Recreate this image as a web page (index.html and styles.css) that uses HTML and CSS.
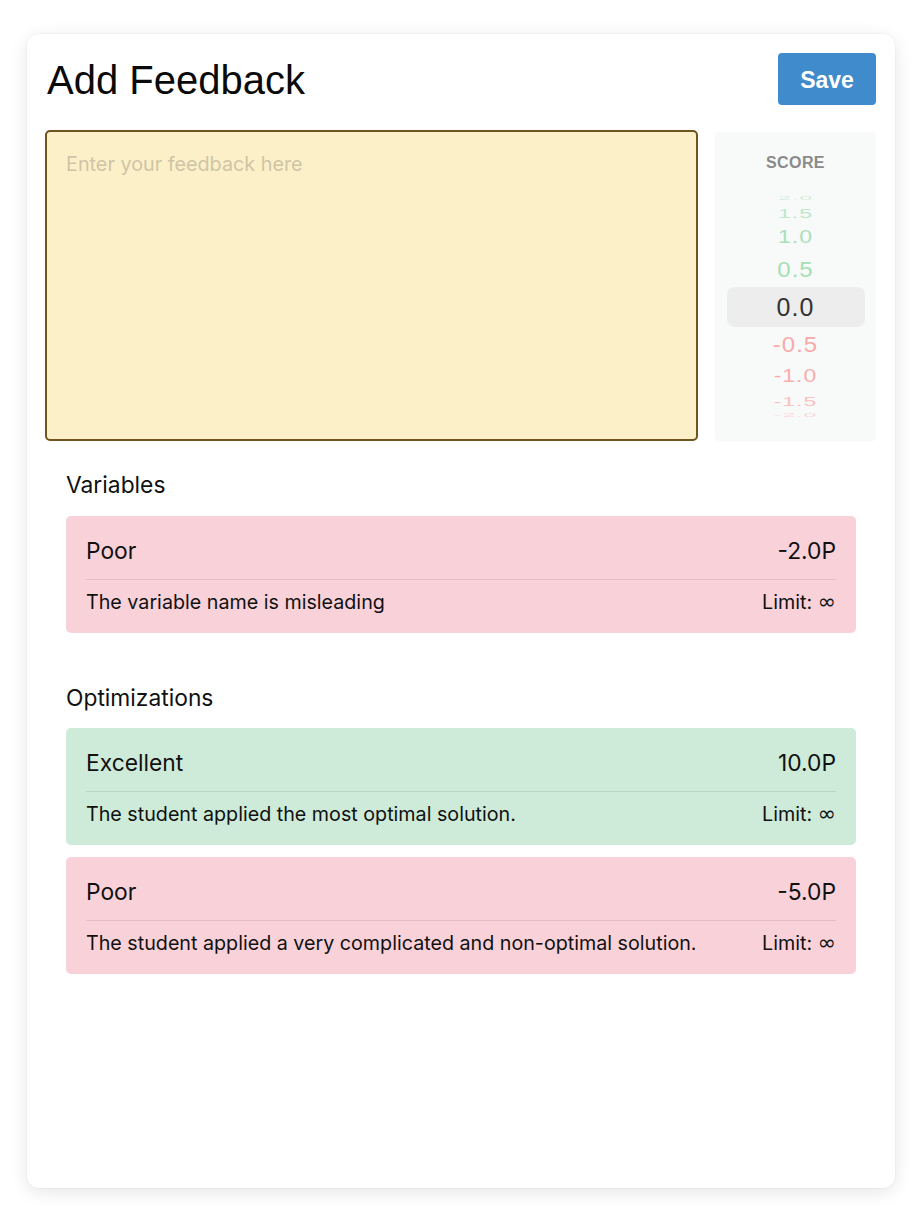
FILE: index.html
```html
<!DOCTYPE html>
<html lang="en">
<head>
<meta charset="utf-8">
<title>Add Feedback</title>
<link rel="stylesheet" href="styles.css">
</head>
<body>
<div class="sheet">
  <header class="head">
    <h1 class="title">Add Feedback</h1>
    <button class="save">Save</button>
  </header>
  <div class="top">
    <div class="feedback"><span class="placeholder">Enter your feedback here</span></div>
    <div class="score">
      <div class="score-label">SCORE</div>
      <div class="wheel">
        <div class="item pos d4"><span>2.0</span></div>
        <div class="item pos d3"><span>1.5</span></div>
        <div class="item pos d2"><span>1.0</span></div>
        <div class="item pos d1"><span>0.5</span></div>
        <div class="item sel"><span>0.0</span></div>
        <div class="item neg d1"><span>-0.5</span></div>
        <div class="item neg d2"><span>-1.0</span></div>
        <div class="item neg d3"><span>-1.5</span></div>
        <div class="item neg d4"><span>-2.0</span></div>
      </div>
    </div>
  </div>

  <section class="group">
    <h2 class="group-title">Variables</h2>
    <div class="crit bad">
      <div class="crit-row main"><span>Poor</span><span>-2.0P</span></div>
      <div class="crit-row sub"><span>The variable name is misleading</span><span>Limit: <span class="inf">∞</span></span></div>
    </div>
  </section>

  <section class="group">
    <h2 class="group-title">Optimizations</h2>
    <div class="crit good">
      <div class="crit-row main"><span>Excellent</span><span>10.0P</span></div>
      <div class="crit-row sub"><span>The student applied the most optimal solution.</span><span>Limit: <span class="inf">∞</span></span></div>
    </div>
    <div class="crit bad">
      <div class="crit-row main"><span>Poor</span><span>-5.0P</span></div>
      <div class="crit-row sub"><span>The student applied a very complicated and non-optimal solution.</span><span>Limit: <span class="inf">∞</span></span></div>
    </div>
  </section>
</div>
</body>
</html>
```

FILE: styles.css
```css
* { box-sizing: border-box; }
html, body { margin: 0; padding: 0; background: #ffffff; }
body {
  font-family: Inter, "Liberation Sans", Arial, sans-serif;
  color: #111;
  padding: 34px 28px 35px 27px;
}
.sheet {
  background: #fff;
  border-radius: 12px;
  box-shadow: 0 4px 18px rgba(0,0,0,0.10), 0 0 2px rgba(0,0,0,0.08);
  height: 1154px;
  padding: 19px 19px 0 20px;
}
.head {
  display: flex;
  justify-content: space-between;
  align-items: flex-start;
  height: 77px;
}
.title {
  margin: 7px 0 0 0;
  font-family: "Liberation Sans", Arial, sans-serif;
  font-weight: 400;
  font-size: 40px;
  line-height: 40px;
  color: #0a0a0a;
}
.save {
  width: 98px;
  height: 52px;
  border: none;
  border-radius: 4px;
  background: #3f8bcb;
  color: #fff;
  font-family: "Liberation Sans", Arial, sans-serif;
  font-weight: 700;
  font-size: 23px;
  padding: 3px 0 0 0;
}
.top {
  display: flex;
  gap: 17px;
  margin-left: -2px;
  height: 311px;
}
.feedback {
  width: 653px;
  height: 311px;
  background: #fcf0c9;
  border: 2px solid #6f5420;
  border-radius: 5px;
  padding: 20px 19px;
}
.placeholder {
  font-size: 19.8px;
  color: #cfc5a6;
}
.score {
  flex: 1;
  margin-top: 2px;
  background: #f8f9f9;
  border-radius: 4px;
  display: flex;
  flex-direction: column;
  align-items: center;
  padding-top: 22px;
}
.score-label {
  font-family: "Liberation Sans", Arial, sans-serif;
  font-weight: 700;
  font-size: 16px;
  color: #8a8a8a;
  letter-spacing: 0.4px;
  line-height: 18px;
}
.wheel {
  margin-top: 22px;
  width: 138px;
  display: flex;
  flex-direction: column;
  align-items: center;
  font-family: "Liberation Sans", Arial, sans-serif;
}
.item {
  width: 100%;
  display: flex;
  align-items: center;
  justify-content: center;
  overflow: visible;
}
.item span {
  display: inline-block;
  font-size: 25px;
  line-height: 1;
  letter-spacing: 1px;
}
.item.sel {
  height: 40px;
  background: #ededed;
  border-radius: 8px;
  color: #333;
}
.item.d1 { height: 35px; }
.item.d1 span { transform: scaleY(0.92); font-size: 24px; }
.item.d2 { height: 29px; }
.item.d2 span { transform: scaleY(0.78); font-size: 23px; }
.item.d3 { height: 20px; }
.item.d3 span { transform: scaleY(0.55); font-size: 23px; }
.item.d4 { height: 9px; }
.item.d4 span { transform: scaleY(0.25); font-size: 23px; }
.pos { color: #96dca8; }
.neg { color: #f89c9c; }
.pos.d1, .neg.d1 { opacity: 0.85; }
.pos.d2, .neg.d2 { opacity: 0.8; }
.pos.d3, .neg.d3 { opacity: 0.6; }
.pos.d4, .neg.d4 { opacity: 0.35; }

.group {
  padding: 0 20px 0 19px;
}
.group + .group { margin-top: 52px; }
.group-title {
  margin: 0;
  padding-top: 30px;
  font-weight: 400;
  font-size: 22.8px;
  line-height: 28px;
  color: #111;
  height: 75px;
}
.group + .group .group-title { padding-top: 0; height: 44px; margin-top: -1px; }
.crit {
  border-radius: 5px;
  padding: 0 20px;
  height: 117px;
}
.crit + .crit { margin-top: 12px; }
.bad { background: #f9d1d9; }
.good { background: #cdebd8; }
.crit-row {
  display: flex;
  justify-content: space-between;
  align-items: center;
}
.crit-row.main {
  height: 64px;
  font-size: 22.8px;
  padding-top: 5px;
}
.bad .crit-row.main { border-bottom: 1px solid #e6bcc5; }
.good .crit-row.main { border-bottom: 1px solid #b8d8c4; }
.crit-row.sub {
  height: 43px;
  font-size: 19.7px;
}
.inf {
  font-family: "DejaVu Sans", sans-serif;
  font-size: 22px;
  line-height: 1;
}
```
